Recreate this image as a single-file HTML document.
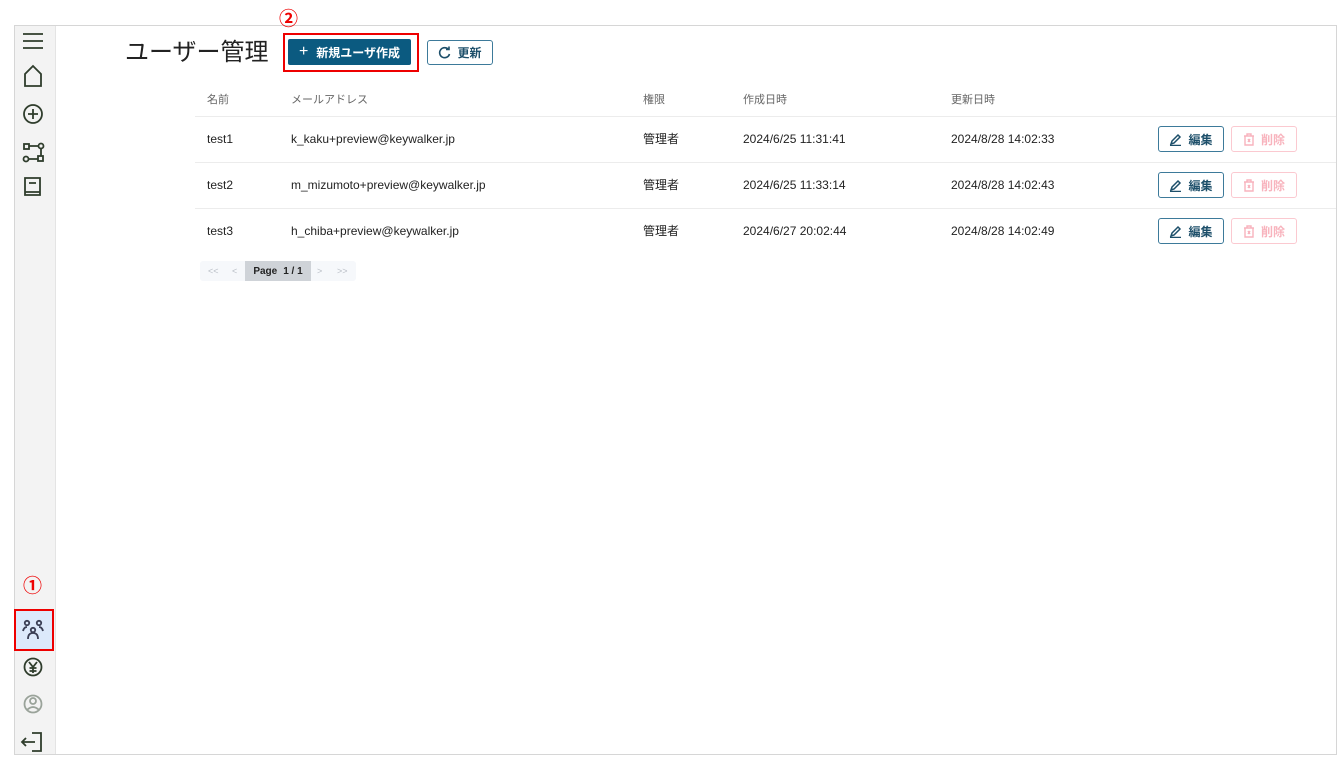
<!DOCTYPE html>
<html><head><meta charset="utf-8"><style>
*{box-sizing:border-box;margin:0;padding:0}
body{width:1344px;height:761px;background:#fff;position:relative;font-family:"Liberation Sans","Noto Sans CJK JP",sans-serif;overflow:hidden;color:#222}
.abs{position:absolute}
.frame{left:14px;top:25px;width:1323px;height:730px;border:1px solid #d6d6d6}
.side{left:15px;top:26px;width:41px;height:728px;background:#f3f3f3;border-right:1px solid #e4e4e4}
.t{font-size:12px;color:#222;white-space:nowrap;line-height:16px;height:16px}
.h{font-size:11px;color:#666;white-space:nowrap;line-height:14px}
.line{left:195px;width:1141px;height:1px;background:#ececec}
.btnE{width:66px;height:26px;border:1.5px solid #3d7a9a;border-radius:3px;color:#1d4f6a;font-size:12px;font-weight:bold;display:flex;align-items:center;justify-content:center;gap:6px}
.btnD{width:66px;height:26px;border:1.5px solid #fbc9d0;border-radius:3px;color:#f8b3bd;font-size:12px;font-weight:bold;display:flex;align-items:center;justify-content:center;gap:6px}
.num{color:#e00;font-size:19px;font-weight:bold;line-height:20px}
</style></head><body>
<div class="abs frame"></div>
<div class="abs side"></div>
<svg class="abs" style="left:15px;top:26px" width="41" height="728" fill="none" stroke="#2f3d2c" stroke-width="1.8">
<path d="M8 8h20M8 15h20M8 22h20"/>
<path d="M10 60V48l8-8 8 8v12z"/>
<circle cx="18" cy="88" r="9"/><path d="M18 83v10M13 88h10"/>
<rect x="9" y="118" width="5" height="5"/><circle cx="26" cy="120" r="2.5"/><circle cx="11" cy="133" r="2.5"/><rect x="23" y="130" width="5" height="5"/><path d="M14 120h9M14 133h9M26 123v7"/>
<path d="M10 152h15v17H10zM10 166h15M14 157h7"/>
<circle cx="18" cy="641" r="8.5"/><path d="M14 636l4 5 4-5M18 641v6M14.5 642h7M14.5 645h7"/>
<g stroke="#9aa39a"><circle cx="18" cy="678" r="8.5"/><circle cx="18" cy="675" r="3"/><path d="M12 684q6-6 12 0"/></g>
<path d="M17 707h9v18h-9M8 716h12M11 712l-4 4 4 4"/>
</svg>
<div class="abs" style="left:14px;top:609px;width:40px;height:42px;background:#dce9fb;border:2.5px solid #e00"></div>
<svg class="abs" style="left:15px;top:609px" width="41" height="42" fill="none" stroke="#3b3f55" stroke-width="1.8"><circle cx="12" cy="14" r="2.2"/><circle cx="24" cy="14" r="2.2"/><circle cx="18" cy="21" r="2.2"/><path d="M8 22q1-4 4-4M28 22q-1-4-4-4M13 30q0-6 5-6t5 6"/></svg>
<div class="abs num" style="left:23px;top:577px">①</div>
<div class="abs num" style="left:279px;top:10px">②</div>
<div class="abs" style="left:125px;top:38px;font-size:24px;line-height:30px;color:#222">ユーザー管理</div>
<div class="abs" style="left:283px;top:33px;width:136px;height:39px;border:2.5px solid #e00"></div>
<div class="abs" style="left:288px;top:39px;width:123px;height:26px;background:#0b5a80;border-radius:2px;color:#fff;font-size:12px;font-weight:bold;display:flex;align-items:center;justify-content:center;gap:8px"><span style="font-size:16px;font-weight:normal">+</span>新規ユーザ作成</div>
<div class="abs" style="left:427px;top:40px;width:66px;height:25px;border:1.5px solid #3d7a9a;border-radius:3px;color:#1d4f6a;font-size:12px;font-weight:bold;display:flex;align-items:center;justify-content:center;gap:6px"><svg width="13" height="13" fill="none" stroke="#1d4f6a" stroke-width="1.6"><path d="M10.5 3.5A5 5 0 1 0 11.5 8"/><path d="M8 3.5h3V0.5"/></svg>更新</div>
<div class="abs h" style="left:207px;top:93px">名前</div>
<div class="abs h" style="left:291px;top:93px">メールアドレス</div>
<div class="abs h" style="left:643px;top:93px">権限</div>
<div class="abs h" style="left:743px;top:93px">作成日時</div>
<div class="abs h" style="left:951px;top:93px">更新日時</div>
<div class="abs line" style="top:116px"></div>
<div class="abs line" style="top:162px"></div>
<div class="abs line" style="top:208px"></div>

<div class="abs t" style="left:207px;top:131px">test1</div>
<div class="abs t" style="left:291px;top:131px">k_kaku+preview@keywalker.jp</div>
<div class="abs t" style="left:643px;top:131px">管理者</div>
<div class="abs t" style="left:743px;top:131px">2024/6/25 11:31:41</div>
<div class="abs t" style="left:951px;top:131px">2024/8/28 14:02:33</div>

<div class="abs t" style="left:207px;top:177px">test2</div>
<div class="abs t" style="left:291px;top:177px">m_mizumoto+preview@keywalker.jp</div>
<div class="abs t" style="left:643px;top:177px">管理者</div>
<div class="abs t" style="left:743px;top:177px">2024/6/25 11:33:14</div>
<div class="abs t" style="left:951px;top:177px">2024/8/28 14:02:43</div>

<div class="abs t" style="left:207px;top:223px">test3</div>
<div class="abs t" style="left:291px;top:223px">h_chiba+preview@keywalker.jp</div>
<div class="abs t" style="left:643px;top:223px">管理者</div>
<div class="abs t" style="left:743px;top:223px">2024/6/27 20:02:44</div>
<div class="abs t" style="left:951px;top:223px">2024/8/28 14:02:49</div>

<div class="abs btnE" style="left:1158px;top:126px"><svg width="13" height="13" fill="none" stroke="#1d4f6a" stroke-width="1.5"><path d="M2 11l1-3 6-6 2 2-6 6zM1 12.5h11"/></svg>編集</div>
<div class="abs btnD" style="left:1231px;top:126px"><svg width="12" height="13" fill="none" stroke="#f8b3bd" stroke-width="1.4"><path d="M1 3h10M4 3V1h4v2M2 3v9h8V3M5 6l2 3M7 6l-2 3"/></svg>削除</div>
<div class="abs btnE" style="left:1158px;top:172px"><svg width="13" height="13" fill="none" stroke="#1d4f6a" stroke-width="1.5"><path d="M2 11l1-3 6-6 2 2-6 6zM1 12.5h11"/></svg>編集</div>
<div class="abs btnD" style="left:1231px;top:172px"><svg width="12" height="13" fill="none" stroke="#f8b3bd" stroke-width="1.4"><path d="M1 3h10M4 3V1h4v2M2 3v9h8V3M5 6l2 3M7 6l-2 3"/></svg>削除</div>
<div class="abs btnE" style="left:1158px;top:218px"><svg width="13" height="13" fill="none" stroke="#1d4f6a" stroke-width="1.5"><path d="M2 11l1-3 6-6 2 2-6 6zM1 12.5h11"/></svg>編集</div>
<div class="abs btnD" style="left:1231px;top:218px"><svg width="12" height="13" fill="none" stroke="#f8b3bd" stroke-width="1.4"><path d="M1 3h10M4 3V1h4v2M2 3v9h8V3M5 6l2 3M7 6l-2 3"/></svg>削除</div>

<div class="abs" style="left:200px;top:261px;width:156px;height:20px;background:#f6f8fb;border-radius:3px;font-size:9px;color:#b9bec6">
<span class="abs" style="left:8px;top:5px">&lt;&lt;</span>
<span class="abs" style="left:32px;top:5px">&lt;</span>
<div class="abs" style="left:45px;top:0;width:66px;height:20px;background:#cfd3d8;color:#222;font-size:10px;font-weight:bold;display:flex;align-items:center;justify-content:center;gap:6px"><span>Page</span><span>1 / 1</span></div>
<span class="abs" style="left:117px;top:5px">&gt;</span>
<span class="abs" style="left:137px;top:5px">&gt;&gt;</span>
</div>
</body></html>
